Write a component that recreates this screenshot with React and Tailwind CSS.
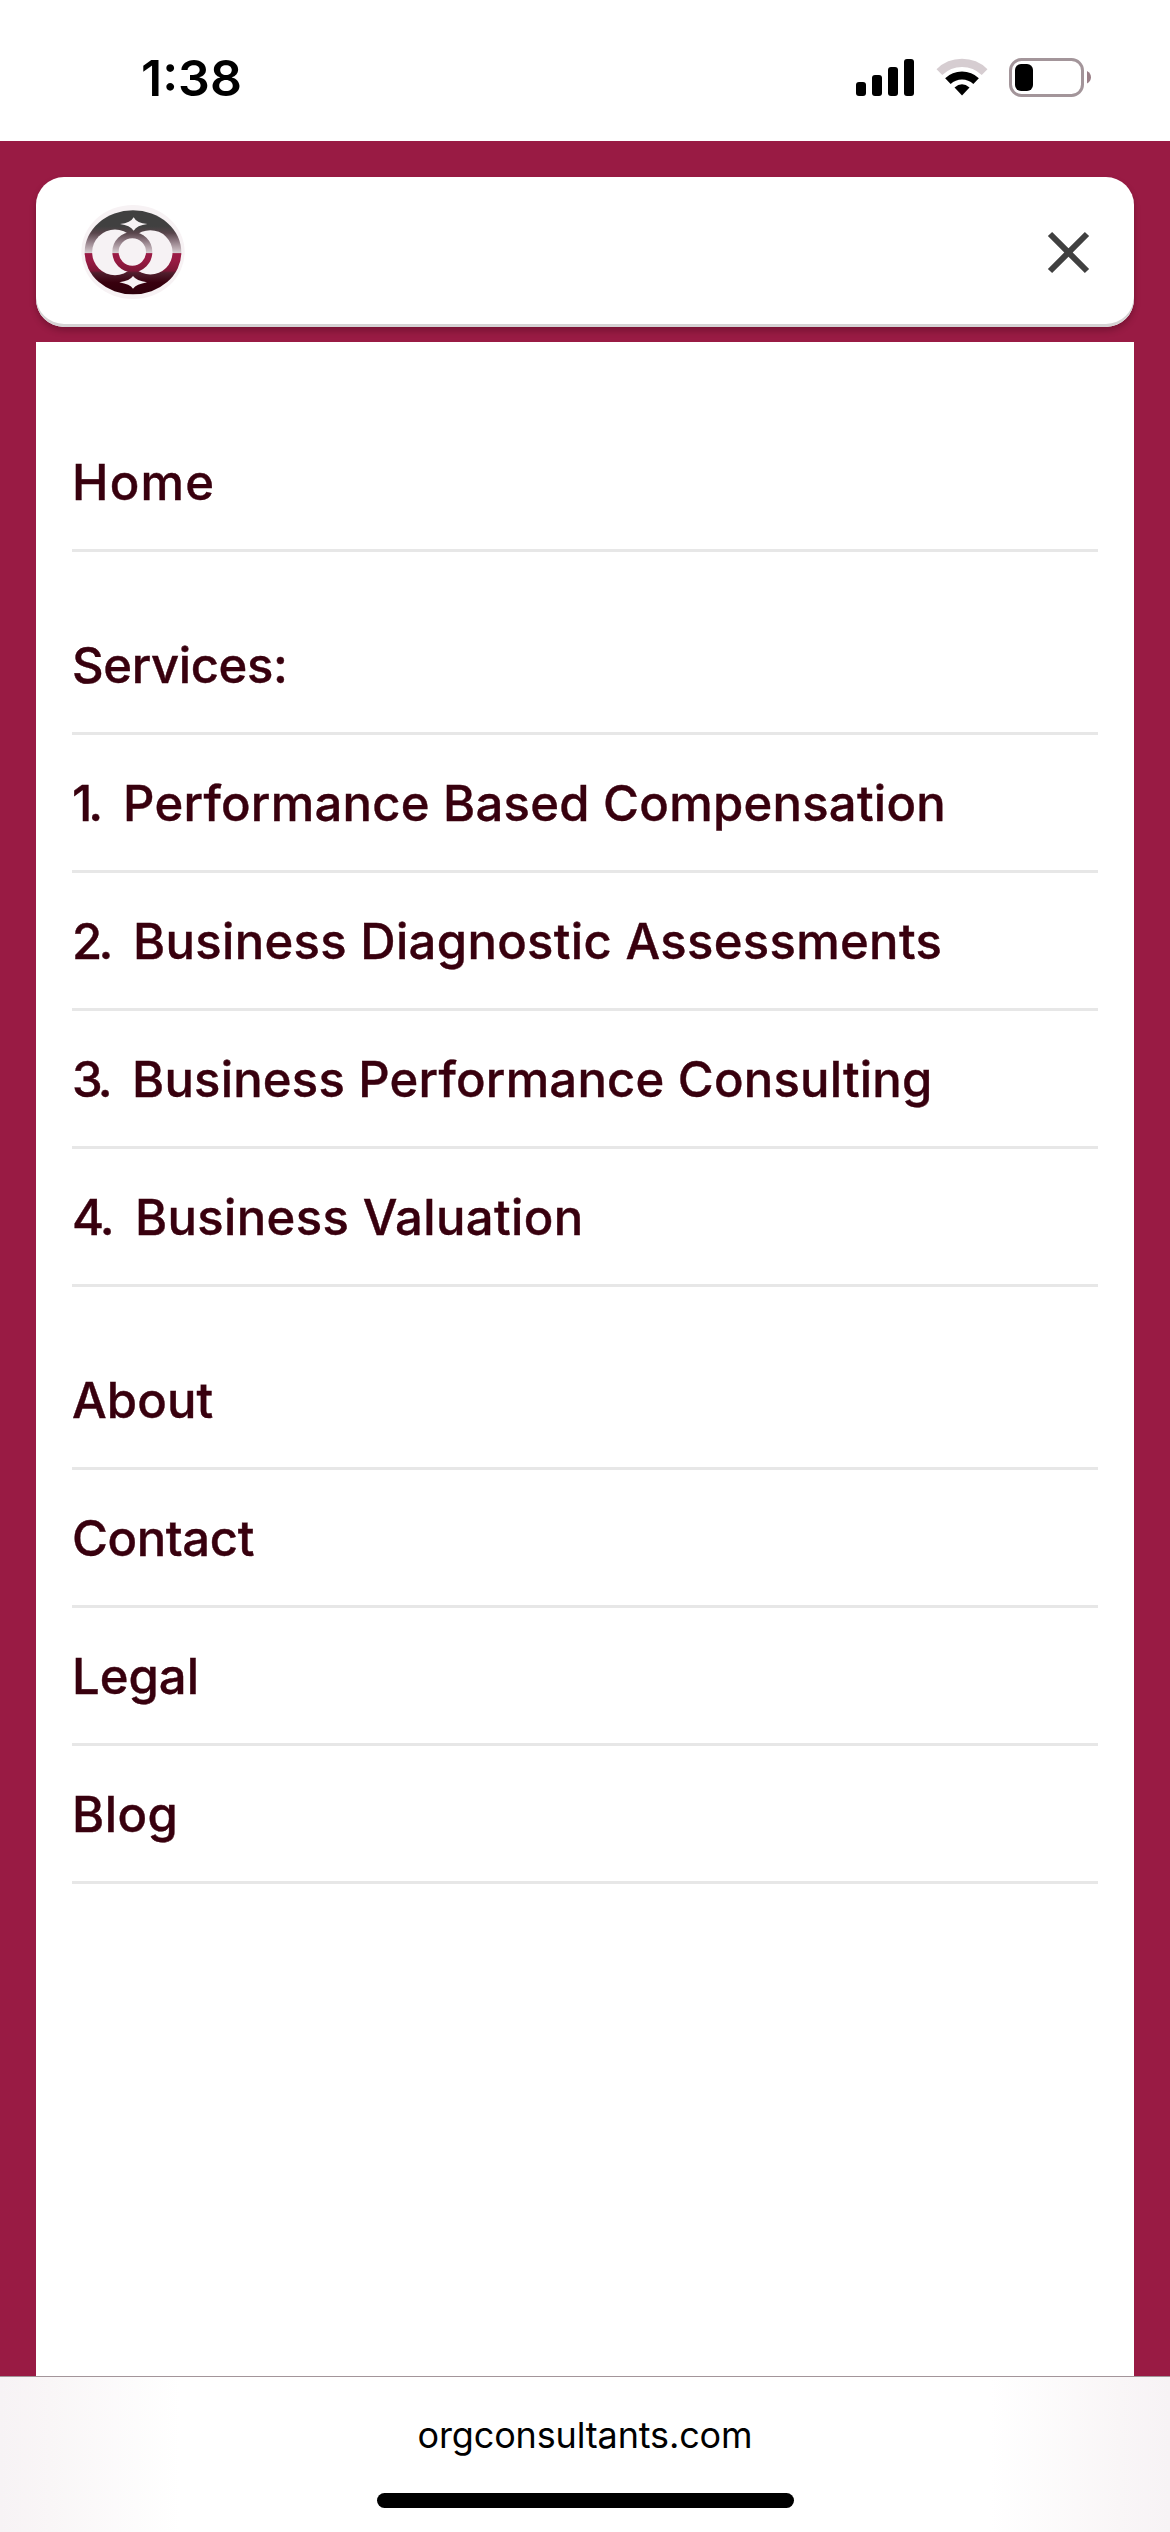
const groups = [
  { gap: "pt-[72px]", items: [{ label: "Home", tracking: "tracking-[1.2px]" }] },
  {
    gap: "pt-[45px]",
    items: [
      { label: "Services:", tracking: "tracking-[-0.4px]" },
      { no: "1.", noClass: "w-[51px] tracking-[-4px]", label: "Performance Based Compensation", tracking: "tracking-[0.25px]" },
      { no: "2.", noClass: "w-[61px] tracking-[-3.7px]", label: "Business Diagnostic Assessments", tracking: "tracking-[0.31px]" },
      { no: "3.", noClass: "w-[60px] tracking-[-4px]", label: "Business Performance Consulting", tracking: "tracking-[0.2px]" },
      { no: "4.", noClass: "w-[63px] tracking-[-2.8px]", label: "Business Valuation", tracking: "tracking-[0.35px]" },
    ],
  },
  {
    gap: "pt-[45px]",
    items: [
      { label: "About", tracking: "tracking-[0.1px]" },
      { label: "Contact", tracking: "tracking-[-0.4px]" },
      { label: "Legal", tracking: "tracking-[0px]" },
      { label: "Blog", tracking: "tracking-[0.5px]" },
    ],
  },
];

function Signal() {
  return (
    <svg width="58" height="37" viewBox="0 0 58 37" className="block">
      <rect x="0" y="23" width="10" height="14" rx="3" />
      <rect x="16" y="16" width="10" height="21" rx="3" />
      <rect x="32" y="8" width="10" height="29" rx="3" />
      <rect x="48" y="0" width="10" height="37" rx="3" />
    </svg>
  );
}

function Wifi() {
  return (
    <svg width="52" height="38" viewBox="0 0 52 38" className="block">
      <path d="M3.4 14.1A32.5 32.5 0 0 1 48.6 14.1" fill="none" stroke="#d6cdd1" strokeWidth="8.2" />
      <path d="M11.9 23.1A20.5 20.5 0 0 1 40.1 23.1" fill="none" stroke="#000" strokeWidth="8" />
      <path d="M18.5 29.6Q26 23 33.5 29.6L26 37.4Z" />
    </svg>
  );
}

function Battery() {
  return (
    <svg width="82" height="39" viewBox="0 0 82 39" className="block">
      <rect x="1.5" y="1.5" width="72" height="36" rx="11" fill="none" stroke="#a3959a" strokeWidth="3" />
      <rect x="6" y="6" width="18" height="27" rx="6" />
      <path d="M78 13C80.8 14.5 82 17 82 19.3C82 21.6 80.8 24.3 78 25.6Z" fill="#9a7f87" />
    </svg>
  );
}

function Logo() {
  return (
    <svg width="104" height="94" viewBox="0 0 312 282" className="block">
      <defs>
        <linearGradient id="metal" gradientUnits="userSpaceOnUse" x1="0" y1="16" x2="0" y2="268">
          <stop offset="0" stopColor="#404040" />
          <stop offset="0.19" stopColor="#404040" />
          <stop offset="0.27" stopColor="#58454b" />
          <stop offset="0.36" stopColor="#8c7780" />
          <stop offset="0.46" stopColor="#bfb0b6" />
          <stop offset="0.505" stopColor="#d6ced1" />
          <stop offset="0.515" stopColor="#9b1b45" />
          <stop offset="0.6" stopColor="#981a43" />
          <stop offset="0.72" stopColor="#7d1736" />
          <stop offset="0.745" stopColor="#4f1f2d" />
          <stop offset="0.8" stopColor="#45101f" />
          <stop offset="0.86" stopColor="#38000e" />
          <stop offset="1" stopColor="#2e000b" />
        </linearGradient>
      </defs>
      <ellipse cx="156" cy="141" rx="155" ry="141" fill="#f7f2f4" />
      <ellipse cx="156" cy="142" rx="145" ry="126" fill="url(#metal)" />
      <g fill="#f6f2f4">
        <circle cx="102" cy="142" r="68.5" />
        <circle cx="208" cy="142" r="66.5" />
        <path d="M158 37Q167 55 199 57Q168 61 158 77Q147 61 117 57Q149 54 158 37Z" />
        <path d="M156 213Q166 227 198 232Q166 238 156 251Q147 238 115 232Q147 227 156 213Z" />
      </g>
      <circle cx="154" cy="141" r="50.5" fill="#f6f2f4" stroke="url(#metal)" strokeWidth="19" />
    </svg>
  );
}

function MenuRow({ item }) {
  return (
    <li className="flex h-[138px] items-center border-b-[3px] border-[#e7e7e7] pt-[3px] whitespace-pre">
      {item.no && <span className={"shrink-0 " + item.noClass}>{item.no}</span>}
      <span className={item.tracking}>{item.label}</span>
    </li>
  );
}

export default function App() {
  return (
    <div className="flex h-[2532px] w-[1170px] flex-col overflow-hidden bg-[#991b44] font-[Inter,sans-serif]">
      <header className="flex h-[141px] shrink-0 items-start bg-white text-black">
        <div className="ml-[141px] mt-[48px] text-[50px] leading-[60px] font-semibold">1:38</div>
        <div className="ml-auto mr-[79px] mt-[58px] flex items-start">
          <div className="mt-px mr-[21.5px]"><Signal /></div>
          <div className="mr-[21.5px]"><Wifi /></div>
          <Battery />
        </div>
      </header>

      <nav className="mx-9 mt-9 flex h-[150px] shrink-0 items-center justify-between rounded-[28px] bg-white pl-[45px] pr-[44px] shadow-[inset_0_-3px_0_#d5d3d4,0_4px_6px_rgba(40,0,15,0.28)]">
        <Logo />
        <svg width="43" height="43" viewBox="0 0 43 43" className="block">
          <path d="M3 3L40 40M40 3L3 40" fill="none" stroke="#404040" strokeWidth="6" />
        </svg>
      </nav>

      <main className="mx-9 mt-[15px] flex-1 bg-white px-9 text-[49px] leading-[58px] font-medium text-[#38000e] [-webkit-text-stroke:0.4px_#38000e]">
        {groups.map((g, i) => (
          <ul key={i} className={g.gap}>
            {g.items.map((item) => (
              <MenuRow key={item.label} item={item} />
            ))}
          </ul>
        ))}
      </main>

      <footer className="flex h-[156px] shrink-0 flex-col items-center border-t border-[#a3959a] bg-[linear-gradient(90deg,#f7f3f5_0px,#f9f6f7_50px,#ffffff_180px,#ffffff_990px,#f9f6f7_1120px,#f7f3f5_1170px)] text-black">
        <div className="mt-[36px] text-[36px] leading-[44px] tracking-[-0.15px]">orgconsultants.com</div>
        <div className="mt-[36px] h-[15px] w-[417px] rounded-full bg-black" />
      </footer>
    </div>
  );
}
